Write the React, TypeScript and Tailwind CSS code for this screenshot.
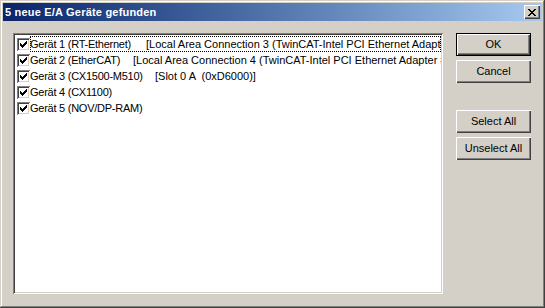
import React from "react";

const font = { fontFamily: '"Liberation Sans", Arial, sans-serif' };

function Check() {
  const px: [number, number][] = [
    [6, 0],
    [5, 1], [6, 1],
    [0, 2], [4, 2], [5, 2], [6, 2],
    [0, 3], [1, 3], [3, 3], [4, 3], [5, 3],
    [0, 4], [1, 4], [2, 4], [3, 4], [4, 4],
    [1, 5], [2, 5], [3, 5],
    [2, 6],
  ];
  return (
    <svg width="7" height="7" viewBox="0 0 7 7" shapeRendering="crispEdges">
      {px.map(([x, y], i) => (
        <rect key={i} x={x} y={y} width="1" height="1" fill="#000" />
      ))}
    </svg>
  );
}

function Box() {
  return (
    <div className="w-[13px] h-[13px] shrink-0 bg-white shadow-[inset_1px_1px_#808080,inset_-1px_-1px_#ffffff,inset_2px_2px_#404040,inset_-2px_-2px_#d4d0c8] flex items-center justify-center">
      <Check />
    </div>
  );
}

function Btn({ label, def }: { label: string; def?: boolean }) {
  return (
    <div
      className={
        "w-[75px] h-[23px] bg-[#d4d0c8] flex items-center justify-center text-[11px] text-black " +
        (def
          ? "shadow-[inset_1px_1px_#000000,inset_-1px_-1px_#000000,inset_2px_2px_#ffffff,inset_-2px_-2px_#404040,inset_-3px_-3px_#808080]"
          : "shadow-[inset_1px_1px_#ffffff,inset_-1px_-1px_#404040,inset_-2px_-2px_#808080]")
      }
      style={font}
    >
      {label}
    </div>
  );
}

const rows: { a: string; b?: string; w?: string }[] = [
  { a: "Gerät 1 (RT-Ethernet)", b: "[Local Area Connection 3 (TwinCAT-Intel PCI Ethernet Adapter #2)]", w: "w-[116px]" },
  { a: "Gerät 2 (EtherCAT)", b: "[Local Area Connection 4 (TwinCAT-Intel PCI Ethernet Adapter #3)]", w: "w-[103px]" },
  { a: "Gerät 3 (CX1500-M510)", b: "[Slot 0 A  (0xD6000)]", w: "w-[125px]" },
  { a: "Gerät 4 (CX1100)" },
  { a: "Gerät 5 (NOV/DP-RAM)" },
];

export default function App() {
  return (
    <div
      className="w-[545px] h-[308px] bg-[#d4d0c8] p-[3px] flex flex-col shadow-[inset_-1px_-1px_#404040,inset_1px_1px_#d4d0c8,inset_-2px_-2px_#808080,inset_2px_2px_#ffffff]"
      style={font}
    >
      <div className="h-[18px] flex items-center pl-[2px] pr-[2px] bg-gradient-to-r from-[#0a246a] to-[#a6caf0]">
        <span className="text-white font-bold text-[11px] leading-none tracking-[0.2px]">5 neue E/A Geräte gefunden</span>
        <div className="ml-auto w-[16px] h-[14px] bg-[#d4d0c8] shadow-[inset_1px_1px_#ffffff,inset_-1px_-1px_#404040,inset_-2px_-2px_#808080] flex items-center justify-center">
          <svg width="8" height="7" viewBox="0 0 8 7" shapeRendering="crispEdges">
            {[0, 1, 2, 3, 4, 5, 6].map((i) => (
              <React.Fragment key={i}>
                <rect x={i} y={i} width="2" height="1" fill="#000" />
                <rect x={6 - i} y={i} width="2" height="1" fill="#000" />
              </React.Fragment>
            ))}
          </svg>
        </div>
      </div>
      <div className="flex flex-1 pt-[12px] pl-[10px]">
        <div className="w-[430px] h-[261px] bg-white p-[2px] shadow-[inset_1px_1px_#808080,inset_-1px_-1px_#ffffff,inset_2px_2px_#404040,inset_-2px_-2px_#d4d0c8]">
          <div className="w-full h-full overflow-hidden pt-[1px]">
            {rows.map((r, i) => (
              <div key={i} className="h-[16px] flex items-center">
                <div className="pl-[2px] flex items-center">
                  <Box />
                </div>
                <div
                  className={
                    "flex-1 h-[16px] flex items-center whitespace-nowrap overflow-hidden text-[11px] text-black " +
                    (i === 0 ? "outline outline-1 outline-dotted outline-black -outline-offset-1" : "")
                  }
                >
                  <span className={"shrink-0 tracking-[-0.25px] " + (r.w ?? "")}>{r.a}</span>
                  {r.b && <span className="whitespace-pre shrink-0">{r.b}</span>}
                </div>
              </div>
            ))}
          </div>
        </div>
        <div className="ml-[13px] flex flex-col">
          <Btn label="OK" def />
          <div className="h-[4px]" />
          <Btn label="Cancel" />
          <div className="h-[27px]" />
          <Btn label="Select All" />
          <div className="h-[4px]" />
          <Btn label="Unselect All" />
        </div>
      </div>
    </div>
  );
}
